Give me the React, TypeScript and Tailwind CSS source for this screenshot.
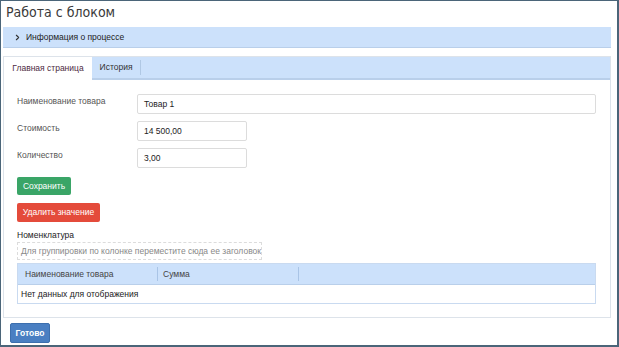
import { ChevronRight } from "lucide-react";

const Field = ({ label, value, wide }: { label: string; value: string; wide?: boolean }) => (
  <div className="flex items-center">
    <div className="w-[120px] shrink-0 text-[8.5px] text-[#555] -mt-[6px]">{label}</div>
    <div
      className={`h-[20px] border border-[#dcdcdc] rounded-[2px] bg-white flex items-center px-[6px] text-[8.5px] text-[#222] ${
        wide ? "w-[459px]" : "w-[110px]"
      }`}
    >
      {value}
    </div>
  </div>
);

export default function App() {
  return (
    <div className="w-[619px] h-[347px] bg-white border-l border-t border-r-2 border-b-2 border-[#4b6579] overflow-hidden font-['Liberation_Sans',Arial,sans-serif]">
      <div className="px-[2px]">
        <h1 className="pl-[3px] h-[26px] text-[14px] leading-[23px] text-[#3a3a3a] font-['Liberation_Sans_Narrow','DejaVu_Sans_Condensed','Liberation_Sans',sans-serif]">
          Работа с блоком
        </h1>

        <div className="w-[608px] h-[21px] bg-[#cce1fb] border-b border-[#b9cfea] flex items-center pl-[10px] gap-[4px] text-[8.5px] text-[#222]">
          <ChevronRight size={9} strokeWidth={3} className="text-[#333]" />
          <span>Информация о процессе</span>
        </div>

        <div className="mt-[8px] w-[608px] h-[262px] border border-[#dde3ea] flex flex-col">
          <div className="h-[23px] bg-[#cce1fb] border-b-2 border-[#b9cfea] flex text-[8.5px]">
            <div className="w-[88px] bg-white flex items-center justify-center text-[#4d2a42] -mb-[2px]">
              Главная страница
            </div>
            <div className="w-[49px] flex items-center justify-center text-[#333] border-r border-[#b0c8e4] my-[3px]">
              История
            </div>
          </div>

          <div className="pl-[13px] pt-[14px] flex flex-col">
            <div className="flex flex-col gap-[7px]">
              <Field label="Наименование товара" value="Товар 1" wide />
              <Field label="Стоимость" value="14 500,00" />
              <Field label="Количество" value="3,00" />
            </div>

            <button className="mt-[9px] w-[54px] h-[18px] rounded-[2px] bg-[#3aa567] text-white text-[8.5px] flex items-center justify-center whitespace-nowrap">
              Сохранить
            </button>
            <button className="mt-[8px] w-[83px] h-[19px] rounded-[2px] bg-[#e44b3b] text-white text-[8.5px] flex items-center justify-center whitespace-nowrap">
              Удалить значение
            </button>

            <div className="mt-[7px] text-[8.5px] leading-[12px] text-[#222]">Номенклатура</div>
            <div className="mt-[1px] w-[245px] h-[18px] border border-dashed border-[#dcdcdc] flex items-center px-[3px] text-[8.5px] text-[#888] whitespace-nowrap overflow-hidden">
              Для группировки по колонке переместите сюда ее заголовок
            </div>

            <div className="mt-[3px] w-[579px] border border-[#c9daf0] text-[8.5px]">
              <div className="h-[21px] bg-[#cce1fb] border-b border-[#b9cfea] flex items-center text-[#444]">
                <div className="w-[140px] pl-[7px] border-r border-[#a9c4e6] h-[14px] flex items-center">
                  Наименование товара
                </div>
                <div className="w-[141px] pl-[5px] border-r border-[#a9c4e6] h-[14px] flex items-center">
                  Сумма
                </div>
              </div>
              <div className="h-[18px] flex items-center pl-[3px] text-[#222]">Нет данных для отображения</div>
            </div>
          </div>
        </div>

        <button className="mt-[5px] ml-[7px] w-[40px] h-[20px] rounded-[2px] bg-[#4a7fc2] border border-[#3d6fae] text-white text-[8.5px] font-bold flex items-center justify-center">
          Готово
        </button>
      </div>
    </div>
  );
}
